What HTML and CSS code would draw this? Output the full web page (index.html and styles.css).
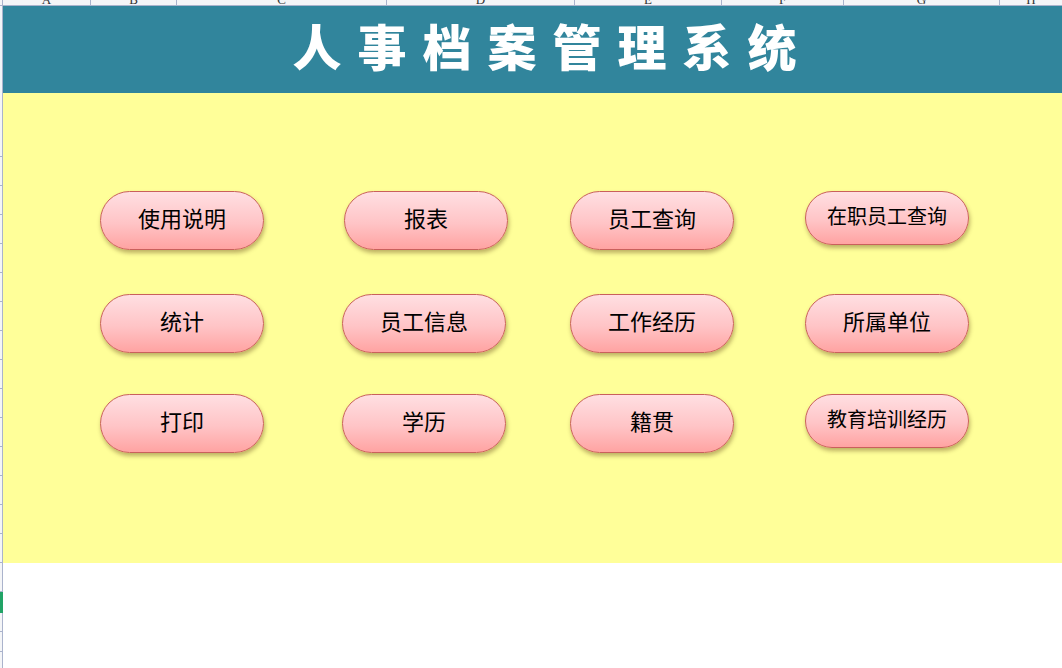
FILE: index.html
```html
<!DOCTYPE html>
<html lang="zh">
<head>
<meta charset="utf-8">
<title>人事档案管理系统</title>
<link rel="stylesheet" href="styles.css">
</head>
<body>
<div class="sheet">
  <div class="rowhdr">
    <span class="rh rh-top"></span>
    <span class="rh rh-title"></span>
    <span class="rh rh-first"></span>
    <span class="rh"></span><span class="rh"></span><span class="rh"></span><span class="rh"></span>
    <span class="rh"></span><span class="rh"></span><span class="rh"></span><span class="rh"></span>
    <span class="rh"></span><span class="rh"></span><span class="rh"></span><span class="rh"></span>
    <span class="rh"></span><span class="rh"></span>
    <span class="rh"></span>
    <span class="rh rh-sel"></span>
    <span class="rh rh-19"></span>
    <span class="rh rh-20"></span>
    <span class="rh rh-rest"></span>
  </div>
  <div class="main">
    <div class="colhdr">
      <span class="ch ch-a">A</span>
      <span class="ch ch-b">B</span>
      <span class="ch ch-c">C</span>
      <span class="ch ch-d">D</span>
      <span class="ch ch-e">E</span>
      <span class="ch ch-f">F</span>
      <span class="ch ch-g">G</span>
      <span class="ch ch-h">H</span>
    </div>
    <div class="banner"><h1 class="title">人事档案管理系统</h1></div>
    <div class="panel">
      <div class="grid">
        <button class="btn">使用说明</button>
        <button class="btn btn-shift">报表</button>
        <button class="btn">员工查询</button>
        <button class="btn btn-small">在职员工查询</button>

        <button class="btn">统计</button>
        <button class="btn">员工信息</button>
        <button class="btn">工作经历</button>
        <button class="btn">所属单位</button>

        <button class="btn">打印</button>
        <button class="btn">学历</button>
        <button class="btn">籍贯</button>
        <button class="btn btn-small">教育培训经历</button>
      </div>
    </div>
  </div>
</div>
</body>
</html>
```

FILE: styles.css
```css
* { box-sizing: border-box; }
html, body { margin: 0; padding: 0; background: #ffffff; }
body {
  width: 1062px;
  height: 668px;
  overflow: hidden;
  font-family: "Noto Sans CJK SC", "Noto Sans", sans-serif;
}
.sheet { display: flex; height: 668px; }

/* row header strip */
.rowhdr {
  width: 3px;
  flex: none;
  display: flex;
  flex-direction: column;
  background: #f4f5f7;
  border-right: 1px solid #aab3cc;
}
.rh { display: block; height: 29px; border-bottom: 1px solid #aab3cc; flex: none; }
.rh-top { height: 6px; }
.rh-title { height: 88px; border-bottom: none; }
.rh-first { height: 63px; }
.rh-sel { height: 21px; border-bottom: none; background: #21a366; margin-right: -1px; }
.rh-19 { height: 19px; }
.rh-20 { height: 20px; }
.rh-rest { flex: 1; border-bottom: none; }

.main { flex: 1; display: flex; flex-direction: column; }

/* column header strip */
.colhdr {
  height: 6px;
  display: flex;
  background: #f4f5f7;
  border-bottom: 1px solid #aab3cc;
  overflow: hidden;
}
.ch {
  display: flex;
  justify-content: center;
  align-items: flex-end;
  font-family: "Liberation Serif", serif;
  font-size: 13px;
  line-height: 13px;
  color: #333;
  border-right: 1px solid #aab3cc;
  margin-top: -9px;
  height: 15px;
  flex: none;
}
.ch-a { width: 88px; }
.ch-b { width: 86px; }
.ch-c { width: 210px; }
.ch-d { width: 188px; }
.ch-e { width: 147px; }
.ch-f { width: 122px; }
.ch-g { width: 156px; }
.ch-h { flex: 1; border-right: none; }

/* title banner */
.banner {
  height: 87px;
  background: #31859c;
  display: flex;
  align-items: center;
  justify-content: center;
  padding-left: 40px;
  padding-bottom: 10px;
}
.title {
  margin: 0;
  color: #ffffff;
  font-size: 49px;
  font-weight: 900;
  letter-spacing: 16px;
  line-height: 1;
}

/* yellow panel */
.panel {
  height: 470px;
  background: #ffff99;
  padding: 98px 0 0 97px;
}
.grid {
  display: grid;
  grid-template-columns: 242px 228px 235px 164px;
  grid-template-rows: 103px 100px 59px;
  align-items: start;
}
.btn {
  width: 164px;
  height: 59px;
  border-radius: 30px;
  border: 1px solid #c9605c;
  background: linear-gradient(to bottom, #ffdfe2 0%, #ffc4c6 55%, #ffa3a2 100%);
  box-shadow: 1px 3px 4px rgba(90, 60, 20, 0.4);
  font-family: "Noto Sans CJK SC", sans-serif;
  font-size: 22px;
  color: #000000;
  padding: 0 0 8px 0;
  display: flex;
  align-items: center;
  justify-content: center;
  cursor: pointer;
}
.btn-shift { margin-left: 2px; }
.btn-small {
  height: 54px;
  border-radius: 27px;
  font-size: 20px;
  padding-bottom: 6px;
}
```
